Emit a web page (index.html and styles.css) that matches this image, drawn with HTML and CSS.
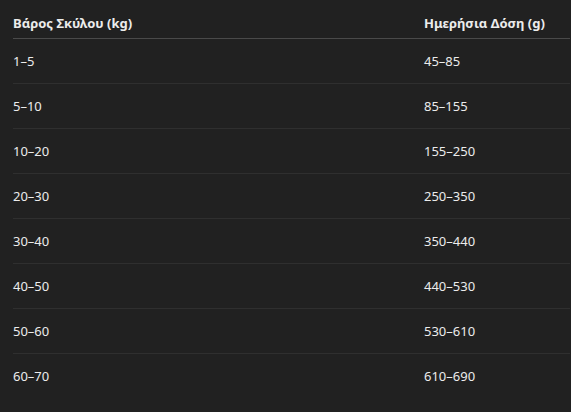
FILE: index.html
```html
<!DOCTYPE html>
<html lang="el">
<head>
<meta charset="utf-8">
<link rel="stylesheet" href="styles.css">
</head>
<body>
<div class="table">
  <div class="row head">
    <div class="cell">Βάρος Σκύλου (kg)</div>
    <div class="cell">Ημερήσια Δόση (g)</div>
  </div>
  <div class="row"><div class="cell">1–5</div><div class="cell">45–85</div></div>
  <div class="row"><div class="cell">5–10</div><div class="cell">85–155</div></div>
  <div class="row"><div class="cell">10–20</div><div class="cell">155–250</div></div>
  <div class="row"><div class="cell">20–30</div><div class="cell">250–350</div></div>
  <div class="row"><div class="cell">30–40</div><div class="cell">350–440</div></div>
  <div class="row"><div class="cell">40–50</div><div class="cell">440–530</div></div>
  <div class="row"><div class="cell">50–60</div><div class="cell">530–610</div></div>
  <div class="row last"><div class="cell">60–70</div><div class="cell">610–690</div></div>
</div>
</body>
</html>
```
FILE: styles.css
```css
html, body {
  margin: 0;
  padding: 0;
  background: #212121;
  height: 100%;
  overflow: hidden;
}
body {
  font-family: "Noto Sans", "Open Sans", sans-serif;
  font-size: 13px;
  color: #ececec;
  padding-left: 13px;
  padding-right: 1px;
}
.table {
  display: flex;
  flex-direction: column;
  padding-top: 13px;
}
.row {
  display: grid;
  grid-template-columns: 411px 1fr;
  border-bottom: 1px solid #2f2f2f;
  padding: 12px 0;
  line-height: 20px;
}
.row.head {
  font-weight: 700;
  padding: 0 0 5px 0;
  border-bottom: 1px solid #4a4a4a;
}
.row.last {
  border-bottom: none;
}
```
